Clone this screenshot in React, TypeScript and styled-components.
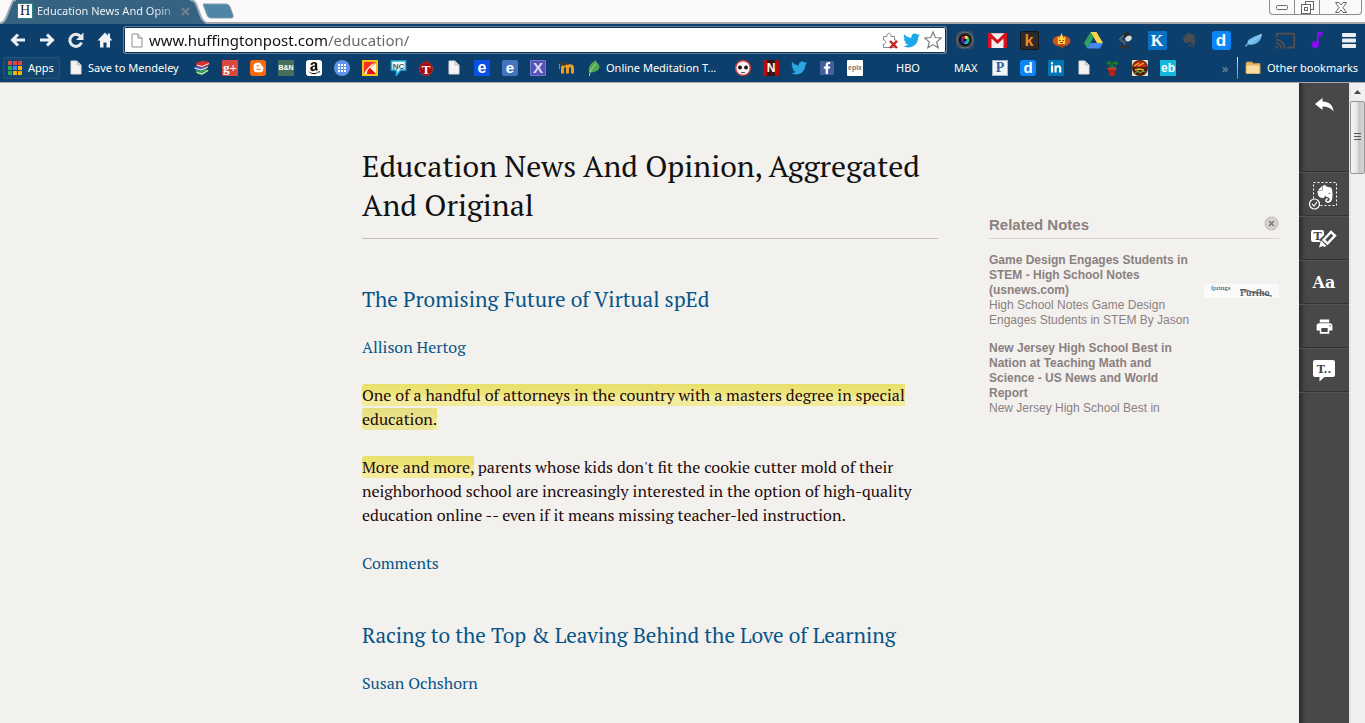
import React from 'react';
import styled, { createGlobalStyle } from 'styled-components';
import {
  FaAmazon,
  FaBloggerB,
  FaEvernote,
  FaFacebookF,
  FaLinkedinIn,
  FaTwitter,
} from 'react-icons/fa';
import { MdCast, MdMusicNote, MdPrint } from 'react-icons/md';

const uiFont = '"Segoe UI", "Noto Sans", "Open Sans", sans-serif';
const serif = '"PT Serif", "Liberation Serif", serif';
const sans = 'Arial, "Liberation Sans", sans-serif';
const navy = '#0c3f6b';

const GlobalStyle = createGlobalStyle`
  * { box-sizing: border-box; }
  body { margin: 0; background: #f3f1ee; }
  button { border: 0; padding: 0; background: none; font: inherit; color: inherit; cursor: pointer; }
  a { text-decoration: none; color: inherit; }
  svg { display: block; flex: none; }
`;

const Window = styled.div`
  display: flex;
  flex-direction: column;
  min-height: 100vh;
  font-family: ${uiFont};
`;

/* ---------- tab strip ---------- */

const TabStrip = styled.header`
  display: flex;
  height: 22px;
  background: #fcf9fa;
`;

const Tab = styled.div`
  position: relative;
  display: flex;
  align-items: center;
  width: 205px;
  height: 22px;
  padding-left: 17px;
  font-size: 11px;
  color: #e9eff4;
`;

const TabShape = styled.svg`
  position: absolute;
  left: 0;
  top: 0;
  z-index: 1;
`;

const Favicon = styled.span`
  position: relative;
  z-index: 2;
  width: 16px;
  height: 16px;
  background: #fff;
  border: 1px solid #2e8576;
  color: #222;
  font: 14px/14px "Liberation Serif", serif;
  text-align: center;
`;

const TabTitle = styled.span`
  position: relative;
  z-index: 2;
  width: 140px;
  margin-left: 4px;
  white-space: nowrap;
  line-height: 20px;
  mask-image: linear-gradient(90deg, #000 118px, rgba(0, 0, 0, 0.3) 138px);
`;

const TabClose = styled.button`
  position: relative;
  z-index: 2;
  margin-left: 4px;
`;

const NewTab = styled.button`
  height: 22px;
  margin-left: -2px;
`;

const WindowControls = styled.div`
  display: flex;
  height: 15px;
  margin: 0 3px 0 auto;
  border: 1px solid #8d8d90;
  border-top: 0;
  border-radius: 0 0 4px 4px;
`;

const WindowButton = styled.button<{ $w: number }>`
  display: flex;
  align-items: center;
  justify-content: center;
  width: ${(p) => p.$w}px;
  & + & { border-left: 1px solid #8d8d90; }
`;

/* ---------- toolbar ---------- */

const Toolbar = styled.nav`
  display: flex;
  align-items: center;
  height: 34px;
  border-top: 2px solid #a5a7ab;
  background: ${navy};
  padding: 0 0 0 3px;
`;

const NavButton = styled.button`
  display: flex;
  align-items: center;
  justify-content: center;
  width: 29px;
  height: 26px;
`;

const Omnibox = styled.label`
  display: flex;
  flex: 1;
  align-items: center;
  gap: 4px;
  height: 28px;
  margin: 0 2px 0 4px;
  padding: 0 4px 0 7px;
  background: #fff;
  border: 1px solid #5b7f9d;
  border-radius: 3px;
  box-shadow: inset 0 0 0 1px #0b2f50;
`;

const UrlInput = styled.input`
  flex: 1;
  min-width: 0;
  height: 24px;
  margin-left: 2px;
  padding: 0;
  border: 0;
  outline: 0;
  font: 15px/24px ${uiFont};
  color: transparent;
  background: linear-gradient(90deg, #111 178px, #666 178px);
  background-clip: text;
`;

const ExtensionButton = styled.button`
  display: flex;
  align-items: center;
  justify-content: center;
  width: 32px;
  height: 26px;
`;

/* ---------- bookmarks ---------- */

const BookmarksBar = styled.nav`
  display: flex;
  align-items: center;
  height: 27px;
  padding: 0 6px 3px 3px;
  border-bottom: 1px solid #a9a9a9;
  background: ${navy};
  font-size: 11px;
  line-height: 16px;
  color: #fff;
  white-space: nowrap;
`;

const AppsButton = styled.a`
  display: flex;
  align-items: center;
  gap: 6px;
  width: 57px;
  height: 22px;
  padding-left: 4px;
  border: 1px solid #28527a;
  border-radius: 2px;
  background: #134570;
`;

const IconLink = styled.a`
  display: flex;
  align-items: center;
  justify-content: center;
  width: 28px;
  height: 22px;
`;

const TextLink = styled.a<{ $w: number; $pad?: number }>`
  display: flex;
  align-items: center;
  gap: 6px;
  width: ${(p) => p.$w}px;
  height: 22px;
  padding-left: ${(p) => p.$pad ?? 0}px;
`;

const Tile = styled.span<{
  $bg: string;
  $fg?: string;
  $size?: number;
  $font?: number;
  $radius?: number;
  $edge?: string;
  $serif?: boolean;
}>`
  display: flex;
  align-items: center;
  justify-content: center;
  width: ${(p) => p.$size ?? 16}px;
  height: ${(p) => p.$size ?? 16}px;
  background: ${(p) => p.$bg};
  color: ${(p) => p.$fg ?? '#fff'};
  box-shadow: ${(p) => (p.$edge ? `inset 0 0 0 1px ${p.$edge}` : 'none')};
  border-radius: ${(p) => p.$radius ?? 1}px;
  font: bold ${(p) => p.$font ?? 12}px/${(p) => p.$size ?? 16}px
    ${(p) => (p.$serif ? '"Liberation Serif", serif' : sans)};
`;

const OverflowButton = styled.button`
  width: 20px;
  margin-left: auto;
  color: #7e8fa0;
  font-size: 13px;
`;

const Divider = styled.span`
  width: 1px;
  height: 22px;
  margin: 0 7px 0 2px;
  background: linear-gradient(#dfe8f0, #5f88b5);
`;

/* ---------- page ---------- */

const Page = styled.div`
  display: flex;
  flex: 1;
  background: #f3f1ee;
`;

const Reader = styled.div`
  display: grid;
  flex: 1;
  grid-template-columns: 1fr 576px 51px 290px;
  padding-right: 20px;
  align-items: start;
`;

const Article = styled.main`
  grid-column: 2;
  padding: 64px 0 24px;
  font: 16px/24px ${serif};
  color: #1f0909;
  white-space: nowrap;
`;

const Title = styled.h1`
  margin: 0 0 48px;
  padding-bottom: 13px;
  border-bottom: 1px solid #c4c1bd;
  font-size: 30px;
  line-height: 39px;
  font-weight: 400;
  color: #111;
`;

const Headline = styled.h2`
  margin: 48px 0 24px;
  font-size: 21px;
  line-height: 24px;
  font-weight: 400;
  color: #065588;
`;

const Paragraph = styled.p`
  margin: 0 0 24px;
`;

const ArticleLink = styled.a`
  color: #065588;
`;

const Marked = styled.mark`
  color: inherit;
  border-radius: 3px 0 0 2px;
  background: linear-gradient(#e9e06c, #ece477 45%, #f3eda0 60%, #f1eb9a);
`;

const SoftMarked = styled(Marked)`
  background: linear-gradient(#e6df80, #ece79a);
`;

const Notes = styled.aside`
  grid-column: 4;
  padding-top: 132px;
  font: 12px/15px ${sans};
  color: #8b8080;
  white-space: nowrap;
`;

const NotesHeader = styled.div`
  display: flex;
  justify-content: space-between;
  height: 24px;
  margin-bottom: 14px;
  border-bottom: 1px solid #d6d3d0;
`;

const NotesTitle = styled.h3`
  margin: 2px 0 0;
  font-size: 15px;
  line-height: 16px;
`;

const NotesClose = styled.button`
  align-self: flex-start;
  height: 16px;
`;

const Note = styled.article`
  display: flex;
  align-items: center;
  justify-content: space-between;
  margin-bottom: 13px;
`;

const NoteText = styled.p`
  margin: 0;
`;

const SideBar = styled.nav`
  width: 50px;
  background: linear-gradient(90deg, #2b2a2b, #444 5px, #484848 8px);
`;

const SideButton = styled.button<{ $first?: boolean }>`
  display: flex;
  align-items: ${(p) => (p.$first ? 'flex-start' : 'center')};
  justify-content: center;
  width: 50px;
  height: ${(p) => (p.$first ? 89 : 44)}px;
  padding-top: ${(p) => (p.$first ? 15 : 2)}px;
  border-bottom: 1px solid #333;
  box-shadow: 0 1px 0 #525252;
  color: #fff;
`;

const FontSample = styled.span`
  font: bold 16px/24px "DejaVu Serif", serif;
`;

const ScrollTrack = styled.div`
  display: flex;
  flex-direction: column;
  align-items: center;
  width: 16px;
  padding: 7px 0 5px;
  background: linear-gradient(90deg, #e2e2e2, #efefef 3px, #f1f1f1);
`;

const ScrollThumb = styled.div`
  display: flex;
  align-items: center;
  justify-content: center;
  width: 15px;
  height: 73px;
  margin: 7px 0 auto;
  border: 1px solid #979797;
  border-radius: 2px;
  background: linear-gradient(90deg, #f6f6f6, #e2e2e2 50%, #c6c6c8 55%, #d5d5d8);
`;

/* ---------- drawings ---------- */

const FileIcon = ({ outline }: { outline?: boolean }) => (
  <svg width="12" height="15" viewBox="0 0 12 15">
    <path
      d="M1 1h6l4 4v9H1z"
      fill={outline ? '#fdfdfd' : '#f4f4f4'}
      stroke={outline ? '#8d8d8d' : '#dcdcdc'}
    />
    <path d="M7 1v4h4" fill={outline ? '#eee' : '#c9ced3'} stroke={outline ? '#8d8d8d' : '#bfc4ca'} />
  </svg>
);

const AppsGrid = () => {
  const colours = ['#e8453c', '#e8453c', '#e8453c', '#2fa84f', '#4a8af4', '#f4b400', '#2fa84f', '#f4b400', '#f4b400'];
  return (
    <svg width="14" height="14" viewBox="0 0 14 14">
      {colours.map((c, i) => (
        <rect key={i} x={(i % 3) * 5} y={Math.floor(i / 3) * 5} width="4" height="4" fill={c} />
      ))}
    </svg>
  );
};

const ArrowIcon = ({ flip }: { flip?: boolean }) => (
  <svg width="16" height="14" viewBox="0 0 16 14" fill="none" stroke="#eef1f5" strokeWidth="3">
    {flip ? <path d="M1 7h12M8 1.500l5.500 5.500L8 12.500" /> : <path d="M15 7H3M8 1.500L2.500 7 8 12.500" />}
  </svg>
);

const ReloadIcon = () => (
  <svg width="16" height="16" viewBox="0 0 16 16">
    <path d="M12.500 4.500A6 6 0 1 0 13.500 10.500" fill="none" stroke="#e6e9ee" strokeWidth="3" />
    <path d="M15.500 0.500v7.500H8z" fill="#e6e9ee" />
  </svg>
);

const HomeIcon = () => (
  <svg width="16" height="16" viewBox="0 0 16 16" fill="#eef1f5">
    <path d="M8 0.500L0.500 8.500H3V15.500H6.500V10.500H9.500V15.500H13V8.500H15.500L13 5.700V1.500H11V3.600z" />
  </svg>
);

const PuzzleIcon = () => (
  <svg width="17" height="17" viewBox="0 0 17 17">
    <path d="M1.500 4.500h3.500V3.500c0-3 4-3 4 0v1h3.500v3.500c3 0 3 3.500 0 3.500v4h-11v-3.500c3 0 3-4 0-4z" fill="#fff" stroke="#888" />
    <path d="M8 9l7 7M15 9l-7 7" stroke="#c3231c" strokeWidth="2.400" />
  </svg>
);

const StarIcon = () => (
  <svg width="18" height="18" viewBox="0 0 18 18">
    <path d="M9 1l2.300 5.500 6 .5-4.600 3.900 1.500 5.900L9 13.600l-5.200 3.200 1.500-5.900L.7 7l6-.5z" fill="#fff" stroke="#7c7c7c" strokeWidth="1.200" />
  </svg>
);

const CameraIcon = () => (
  <svg width="18" height="18" viewBox="0 0 18 18">
    <rect x="0" y="0" width="18" height="18" rx="4" fill="#2c4a63" />
    <circle cx="9" cy="9" r="8" fill="#34383b" stroke="#74797d" />
    <circle cx="9" cy="9" r="5.800" fill="#0a0a0a" />
    <path d="M9 9L5 7a4.500 4.500 0 0 1 4-2.500z" fill="#b33" />
    <path d="M9 9V4.500a4.500 4.500 0 0 1 4 2.500z" fill="#de5" />
    <path d="M9 9l4-2a4.500 4.500 0 0 1 0 4z" fill="#3c6" />
    <path d="M9 9l4 2a4.500 4.500 0 0 1-5 2z" fill="#2bd" />
    <path d="M9 9l-1 4a4.500 4.500 0 0 1-3-6z" fill="#52b" />
    <circle cx="9" cy="9" r="1.500" fill="#111" />
  </svg>
);

const MailIcon = () => (
  <svg width="19" height="15" viewBox="0 0 19 15">
    <rect width="19" height="15" rx="1" fill="#f6f2f2" />
    <path d="M4 13l5.500-5L15 13" fill="none" stroke="#ddd" />
    <path d="M0 0h2.500l7 7L16.500 0H19v15h-3.500V5.500L9.500 11 3.500 5.500V15H0z" fill="#d3141f" />
    <path d="M3 .5h13" stroke="#e9b6b8" />
  </svg>
);

const CrownBubble = () => (
  <svg width="19" height="17" viewBox="0 0 19 17">
    <ellipse cx="9.500" cy="9" rx="9" ry="5.500" fill="#c9531a" />
    <path d="M6 13l6 0-1 4z" fill="#a8400f" />
    <path d="M5.500 4l2 2L9.500 1l2 5 2-2-.5 8H6z" fill="#ffd24a" />
    <path d="M7 8.500h1.500M10.500 8.500H12M8 10.500h3" stroke="#8a3b08" />
  </svg>
);

const DriveIcon = () => (
  <svg width="19" height="17" viewBox="0 0 19 17">
    <path d="M6.500 0h6L19 11h-6z" fill="#fcd24b" />
    <path d="M6.500 0l3 5.300L3.300 16.500 0 11z" fill="#2da160" />
    <path d="M6.400 11H19l-3.200 5.500H3.300z" fill="#4688f1" />
  </svg>
);

const LampIcon = () => (
  <svg width="17" height="18" viewBox="0 0 17 18">
    <path d="M6 4l4.500-3.500 4.500 4.500-5 4z" fill="#26292c" />
    <ellipse cx="11.500" cy="7.500" rx="3.500" ry="2.600" fill="#d9d9d9" transform="rotate(-35 11.500 7.500)" />
    <path d="M6.500 4L3 8.500l4.500 3V15" fill="none" stroke="#5a6066" strokeWidth="2" />
    <ellipse cx="7" cy="15.800" rx="5" ry="2" fill="#2e3337" />
  </svg>
);

const FeatherIcon = () => (
  <svg width="19" height="17" viewBox="0 0 19 17">
    <path d="M1 14l2.500-3C3 6.500 10 5 18 1.500 18 6 15.500 11 9.500 12.500c-2 .5-4 .2-5.500 0L2 15z" fill="#6bb9ea" />
    <path d="M4 11C9 9 13 6 17 2.500" fill="none" stroke="#b5def7" strokeWidth=".8" />
  </svg>
);

const MenuLines = () => (
  <svg width="14" height="15" viewBox="0 0 14 15" fill="#eceef2">
    <rect y="0" width="14" height="4" rx="1" />
    <rect y="5.500" width="14" height="4" rx="1" />
    <rect y="11" width="14" height="4" rx="1" />
  </svg>
);

const BooksIcon = () => (
  <svg width="16" height="16" viewBox="0 0 16 16">
    <path d="M2 10l8-2 5 2.500L8 15.500 2 13z" fill="#3f9d47" />
    <path d="M3 12.500l5 1.500 6-3.500" fill="none" stroke="#eee" />
    <path d="M0 7l9-2 5 2-7 4.500L0 9z" fill="#3a68b8" />
    <path d="M1 8l6 2 7-3" fill="none" stroke="#f5f5f5" />
    <path d="M2 3l7-2.500L15 2v3L8 8 2 5.500z" fill="#d22f33" />
    <path d="M3 5l5 1.500L15 3.500" fill="none" stroke="#f5eeee" />
  </svg>
);

const DotsGlobe = () => (
  <svg width="16" height="16" viewBox="0 0 16 16">
    <circle cx="8" cy="8" r="8" fill="#5e95e6" />
    {[4, 7, 10].map((x) => [4, 7, 10].map((y) => <rect key={`${x}-${y}`} x={x} y={y} width="2" height="2" fill="#fff" />))}
  </svg>
);

const RedFan = () => (
  <svg width="16" height="16" viewBox="0 0 16 16">
    <rect x="1" y="1" width="14" height="14" fill="#f5321e" stroke="#f8bf18" strokeWidth="2" />
    <path d="M2 14C4 9 9 4 14 2L8 8l6 6z" fill="#ffe7c4" />
    <path d="M5 14c0-3 1-5 3-6l6 6z" fill="#e8110f" />
    <path d="M8 8l6-5v11z" fill="#fff3df" />
    <path d="M8 8l6 6H5z" fill="#e8110f" />
  </svg>
);

const ChatNc = () => (
  <svg width="17" height="16" viewBox="0 0 17 16">
    <path d="M1.500 1h14v9h-5l-4 5v-5h-5z" fill="#f4fbfd" stroke="#26b5dc" strokeWidth="1.600" />
    <text x="8.500" y="8.500" textAnchor="middle" fontFamily="Liberation Sans" fontWeight="700" fontSize="8" fill="#555">NC</text>
  </svg>
);

const RedApple = () => (
  <svg width="16" height="16" viewBox="0 0 16 16">
    <circle cx="8" cy="9" r="6.700" fill="#a80a0e" stroke="#c8393b" strokeDasharray="2 1" />
    <path d="M7 3l2-3 2 2z" fill="#b11" />
    <text x="8" y="13.500" textAnchor="middle" fontFamily="Liberation Serif" fontWeight="700" fontSize="13" fill="#fff">T</text>
  </svg>
);

const MoodleIcon = () => (
  <svg width="17" height="16" viewBox="0 0 17 16">
    <path d="M4.500 13.500V8c0-3 5-3 5 0v5.500M9.500 8c0-3 5-3 5 0v5.500" fill="none" stroke="#f29d1e" strokeWidth="3" />
    <path d="M0 4l5-2.500 5 1L7 6z" fill="#3b3b3b" />
    <path d="M1.500 4v5" stroke="#888" />
  </svg>
);

const LeafIcon = () => (
  <svg width="12" height="16" viewBox="0 0 12 16">
    <path d="M1 12C0 7 2 4 8 0c0 3 3 3 3.500 6.500C11.500 10 8 12 3.500 12.500z" fill="#4ea950" />
    <path d="M1.500 16C1.500 11 5 7 8 3.500" fill="none" stroke="#b9dc9d" />
  </svg>
);

const FaceIcon = () => (
  <svg width="16" height="16" viewBox="0 0 16 16">
    <circle cx="8" cy="8" r="7.300" fill="#fbf6f5" stroke="#e0433d" strokeWidth="1.400" />
    <circle cx="5" cy="7.500" r="1.900" fill="#151515" />
    <circle cx="11" cy="7.500" r="1.900" fill="#151515" />
    <path d="M6 12.500h4" stroke="#555" />
  </svg>
);

const PlantIcon = () => (
  <svg width="14" height="16" viewBox="0 0 14 16">
    <path d="M3 9h8l-1.500 7h-5z" fill="#b02318" />
    <path d="M2.500 8.500h9" stroke="#d2402c" strokeWidth="2" />
    <path d="M7 8V3" stroke="#2c7a22" strokeWidth="1.500" />
    <path d="M1 2l4-1 2 3-4 1zM7 3l3-2 4 2-3 2zM4 6l3-1 4 2-4 1z" fill="#1f7a2a" />
  </svg>
);

const BurgerIcon = () => (
  <svg width="16" height="16" viewBox="0 0 16 16">
    <rect width="16" height="16" fill="#e9d9b8" />
    <circle cx="8" cy="8" r="8" fill="#4b1c10" />
    <path d="M1 7c2-8 12-8 14 0z" fill="#c22718" />
    <path d="M2 6l5-3M6 6l6-3M3 10l4-1 5 1" fill="none" stroke="#f0b62a" strokeWidth="1.300" />
    <path d="M3 13l3-2 2 2 3-2 2 1" fill="none" stroke="#6ea43a" strokeWidth="1.200" />
  </svg>
);

const FolderIcon = () => (
  <svg width="16" height="14" viewBox="0 0 16 14">
    <path d="M1 2.500L2 1h5l1 1.500h7v10H1z" fill="#e7b768" stroke="#c18d3d" />
    <path d="M1.500 4.500h13v8h-13z" fill="#f9dca0" />
  </svg>
);

const ReturnIcon = () => (
  <svg width="19" height="14" viewBox="0 0 19 14">
    <path d="M0 6L7.500 0v3.500C14 3.500 18 7 18.500 13.500 16 10 12.500 8.500 7.500 8.500V12z" fill="#fff" />
  </svg>
);

const ClipIcon = () => (
  <svg width="30" height="30" viewBox="0 0 30 30">
    <rect x="4.500" y="2.500" width="23" height="23" fill="none" stroke="#fff" strokeDasharray="2 2" />
    <FaEvernote x="6" y="4" size={20} color="#fff" />
    <circle cx="5.500" cy="24" r="5.500" fill="#484848" />
    <circle cx="5.500" cy="24" r="5" fill="none" stroke="#fff" strokeWidth="1.200" />
    <path d="M3 24l2 2 3-4" fill="none" stroke="#fff" strokeWidth="1.200" />
  </svg>
);

const HighlightIcon = () => (
  <svg width="26" height="18" viewBox="0 0 26 18">
    <rect x="0" y="0" width="13" height="12" rx="2" fill="#fff" />
    <text x="6.500" y="10" textAnchor="middle" fontFamily="DejaVu Serif" fontWeight="700" fontSize="11" fill="#444">T</text>
    <path d="M11 10L19.500 1.500 24 5 15.500 14z" fill="#484848" stroke="#484848" strokeWidth="4" />
    <path d="M12.500 10L20 2 24 5.500 16.500 13.500z" fill="none" stroke="#fff" strokeWidth="2.400" />
    <path d="M10 10.500l5.500 5.500-2.500 1-1-1-4 1.500z" fill="#fff" />
  </svg>
);

const BubbleIcon = () => (
  <svg width="22" height="22" viewBox="0 0 22 22">
    <path d="M2 0h18a2 2 0 0 1 2 2v13a2 2 0 0 1-2 2h-8.500L6.500 21.500V17H2a2 2 0 0 1-2-2V2a2 2 0 0 1 2-2z" fill="#fff" />
    <text x="11" y="12.500" textAnchor="middle" fontFamily="DejaVu Serif" fontWeight="700" fontSize="11" fill="#444">T..</text>
  </svg>
);

const CloseCircle = () => (
  <svg width="15" height="15" viewBox="0 0 15 15">
    <circle cx="7.500" cy="7.500" r="6.500" fill="#d5d4d3" stroke="#bdbbb9" />
    <path d="M5 5l5 5M10 5l-5 5" stroke="#827d7b" strokeWidth="1.600" />
  </svg>
);

const CaptchaThumb = () => (
  <svg width="75" height="14" viewBox="0 0 75 14">
    <rect width="75" height="14" fill="#fafafa" />
    <text x="7" y="6" fontFamily="Liberation Serif" fontSize="7" fill="#333">ſprings</text>
    <text x="36" y="12" fontFamily="Liberation Serif" fontWeight="700" fontSize="10" fill="#666">Purſho</text>
    <path d="M36 6c8-2 12 4 18 3s8 3 14 3" fill="none" stroke="#444" />
  </svg>
);

const Caret = ({ down }: { down?: boolean }) => (
  <svg width="7" height="4" viewBox="0 0 7 4">
    <path d={down ? 'M0 0h7L3.500 4z' : 'M0 4h7L3.500 0z'} fill="#444" />
  </svg>
);

/* ---------- data ---------- */

type Mark = [string, React.ReactNode];

const extensions: Mark[] = [
  ['Camera', <CameraIcon />],
  ['Gmail', <MailIcon />],
  ['Kippt', <Tile $bg="#2d2b2a" $fg="#f08a1c" $size={19} $font={16} $radius={3} $edge="#161616">k</Tile>],
  ['Chat', <CrownBubble />],
  ['Drive', <DriveIcon />],
  ['Lamp', <LampIcon />],
  ['Kindle', <Tile $bg="#0671c4" $size={19} $font={16} $serif>K</Tile>],
  ['Evernote', <FaEvernote size={16} color="#4b4d4e" />],
  ['Diigo', <Tile $bg="#0c86fb" $size={19} $font={17} $radius={3}>d</Tile>],
  ['Feather', <FeatherIcon />],
  ['Cast', <MdCast size={21} color="#55504f" />],
  ['Music', <MdMusicNote size={22} color="#8a0cf5" />],
];

const leftMarks: Mark[] = [
  ['Books', <BooksIcon />],
  ['Google Plus', <Tile $bg="#d9483b" $font={13} $serif>g+</Tile>],
  ['Blogger', <Tile $bg="#fb6a09" $radius={3}><FaBloggerB size={11} /></Tile>],
  ['Barnes and Noble', <Tile $bg="#47705a" $font={7}>B&amp;N</Tile>],
  ['Amazon', <Tile $bg="#fff" $fg="#17120c" $radius={3}><FaAmazon size={14} /></Tile>],
  ['Grid', <DotsGlobe />],
  ['Fan', <RedFan />],
  ['NC', <ChatNc />],
  ['Teachers', <RedApple />],
  ['Page', <FileIcon />],
  ['Edmodo', <Tile $bg="#0b50e6" $font={16}>e</Tile>],
  ['Edublog', <Tile $bg="#4673bf" $font={15} $radius={2}>e</Tile>],
  ['X', <Tile $bg="#5552b8" $fg="#dcdcf4" $font={15} $edge="#7774d2">X</Tile>],
  ['Moodle', <MoodleIcon />],
];

const middleMarks: Mark[] = [
  ['Face', <FaceIcon />],
  ['Netflix', <Tile $bg="linear-gradient(90deg, #b50a10 4px, #3a1412 4px 12px, #b50a10 12px)" $font={12}>N</Tile>],
  ['Twitter', <FaTwitter size={16} color="#2aa6e3" />],
  ['Facebook', <Tile $bg="#43609c" $size={14}><FaFacebookF size={12} /></Tile>],
  ['Epix', <Tile $bg="#fff" $fg="#7b7b7b" $font={7}>epix</Tile>],
];

const rightMarks: Mark[] = [
  ['Pandora', <Tile $bg="#f3f5f7" $fg="#2c5f99" $edge="#9db5cb" $font={14} $serif>P</Tile>],
  ['Diigo', <Tile $bg="#0c86fb" $font={15} $radius={3}>d</Tile>],
  ['LinkedIn', <Tile $bg="#0077b5"><FaLinkedinIn size={12} /></Tile>],
  ['Page', <FileIcon />],
  ['Plant', <PlantIcon />],
  ['Burger', <BurgerIcon />],
  ['Eb', <Tile $bg="#12b9dd" $font={12}>eb</Tile>],
];

const MarkList = ({ items }: { items: Mark[] }) => (
  <>
    {items.map(([name, icon], i) => (
      <IconLink key={i} href="#" aria-label={name}>
        {icon}
      </IconLink>
    ))}
  </>
);

export default function App() {
  return (
    <Window>
      <GlobalStyle />
      <TabStrip>
        <Tab>
          <TabShape width="210" height="24" viewBox="0 0 210 24">
            <path d="M0 24C5 23 6 19 8 14L12 3Q13 0 16 0H190Q194 0 196 4L201 17Q203 22 208 24z" fill="#366382" />
            <path d="M0 23.500C5 22 6 18 8 13L12 3Q13 0 16 0M190 0Q194 0 196 4L201 17Q203 22 208 23.500" fill="none" stroke="#9aa9b4" strokeWidth="2" />
          </TabShape>
          <Favicon>H</Favicon>
          <TabTitle>Education News And Opin</TabTitle>
          <TabClose aria-label="Close tab">
            <svg width="9" height="9" viewBox="0 0 9 9"><path d="M1 1l7 7M8 1L1 8" stroke="#78818a" strokeWidth="1.800" /></svg>
          </TabClose>
        </Tab>
        <NewTab aria-label="New tab">
          <svg width="32" height="22" viewBox="0 0 32 22">
            <path d="M0 4h23q3 0 4 3l3 8q1 3-2 3H8q-3 0-4-3z" fill="#4f86a5" stroke="#7f9dae" />
          </svg>
        </NewTab>
        <WindowControls>
          <WindowButton $w={24} aria-label="Minimize">
            <svg width="12" height="6" viewBox="0 0 12 6"><rect x=".5" y="1.500" width="11" height="4" rx="1" fill="#fff" stroke="#666" /></svg>
          </WindowButton>
          <WindowButton $w={25} aria-label="Restore">
            <svg width="13" height="13" viewBox="0 0 13 13" fill="#fff" stroke="#666"><rect x="4.500" y=".5" width="8" height="8" /><rect x=".5" y="3.500" width="9" height="9" /><rect x="3.500" y="6.500" width="3" height="3" /></svg>
          </WindowButton>
          <WindowButton $w={42} aria-label="Close window">
            <svg width="12" height="11" viewBox="0 0 12 11"><path d="M.5 .5h3.500l2 2.500 2-2.500h3.500L8 5.500l3.500 5H8L6 8l-2 2.500H.500l3.500-5z" fill="#fff" stroke="#666" /></svg>
          </WindowButton>
        </WindowControls>
      </TabStrip>

      <Toolbar>
        <NavButton aria-label="Back"><ArrowIcon /></NavButton>
        <NavButton aria-label="Forward"><ArrowIcon flip /></NavButton>
        <NavButton aria-label="Reload"><ReloadIcon /></NavButton>
        <NavButton aria-label="Home"><HomeIcon /></NavButton>
        <Omnibox>
          <FileIcon outline />
          <UrlInput aria-label="Address" defaultValue="www.huffingtonpost.com/education/" />
          <PuzzleIcon />
          <FaTwitter size={17} color="#1ba8e8" />
          <StarIcon />
        </Omnibox>
        {extensions.map(([name, icon]) => (
          <ExtensionButton key={name} aria-label={name}>{icon}</ExtensionButton>
        ))}
        <ExtensionButton aria-label="Menu"><MenuLines /></ExtensionButton>
      </Toolbar>

      <BookmarksBar>
        <AppsButton href="#"><AppsGrid />Apps</AppsButton>
        <TextLink $w={128} $pad={10} href="#"><FileIcon />Save to Mendeley</TextLink>
        <MarkList items={leftMarks} />
        <TextLink $w={149} $pad={8} href="#"><LeafIcon />Online Meditation T...</TextLink>
        <MarkList items={middleMarks} />
        <TextLink $w={58} $pad={27} href="#">HBO</TextLink>
        <TextLink $w={59} $pad={27} href="#">MAX</TextLink>
        <MarkList items={rightMarks} />
        <OverflowButton aria-label="More bookmarks">»</OverflowButton>
        <Divider />
        <TextLink $w={114} href="#"><FolderIcon />Other bookmarks</TextLink>
      </BookmarksBar>

      <Page>
        <Reader>
          <Article>
            <Title>Education News And Opinion, Aggregated<br />And Original</Title>
            <Headline><a href="#">The Promising Future of Virtual spEd</a></Headline>
            <Paragraph><ArticleLink href="#">Allison Hertog</ArticleLink></Paragraph>
            <Paragraph>
              <Marked>One of a handful of attorneys in the country with a masters degree in special</Marked>
              <br />
              <SoftMarked>education</SoftMarked><Marked>.</Marked>
            </Paragraph>
            <Paragraph>
              <Marked>More and more,</Marked> parents whose kids don't fit the cookie cutter mold of their<br />
              neighborhood school are increasingly interested in the option of high-quality<br />
              education online -- even if it means missing teacher-led instruction.
            </Paragraph>
            <Paragraph><ArticleLink href="#">Comments</ArticleLink></Paragraph>
            <Headline><a href="#">Racing to the Top &amp; Leaving Behind the Love of Learning</a></Headline>
            <Paragraph><ArticleLink href="#">Susan Ochshorn</ArticleLink></Paragraph>
          </Article>
          <Notes>
            <NotesHeader>
              <NotesTitle>Related Notes</NotesTitle>
              <NotesClose aria-label="Close related notes"><CloseCircle /></NotesClose>
            </NotesHeader>
            <Note>
              <NoteText>
                <strong>Game Design Engages Students in<br />STEM - High School Notes<br />(usnews.com)</strong>
                <br />High School Notes Game Design<br />Engages Students in STEM By Jason
              </NoteText>
              <CaptchaThumb />
            </Note>
            <Note>
              <NoteText>
                <strong>New Jersey High School Best in<br />Nation at Teaching Math and<br />Science - US News and World<br />Report</strong>
                <br />New Jersey High School Best in
              </NoteText>
            </Note>
          </Notes>
        </Reader>
        <SideBar>
          <SideButton $first aria-label="Back to page"><ReturnIcon /></SideButton>
          <SideButton aria-label="Clip"><ClipIcon /></SideButton>
          <SideButton aria-label="Highlight"><HighlightIcon /></SideButton>
          <SideButton aria-label="Text style"><FontSample>Aa</FontSample></SideButton>
          <SideButton aria-label="Print"><MdPrint size={19} /></SideButton>
          <SideButton aria-label="Speak"><BubbleIcon /></SideButton>
        </SideBar>
        <ScrollTrack>
          <Caret />
          <ScrollThumb>
            <svg width="7" height="9" viewBox="0 0 7 9"><path d="M0 .5h7M0 3.500h7M0 6.500h7" stroke="#555" /></svg>
          </ScrollThumb>
          <Caret down />
        </ScrollTrack>
      </Page>
    </Window>
  );
}
